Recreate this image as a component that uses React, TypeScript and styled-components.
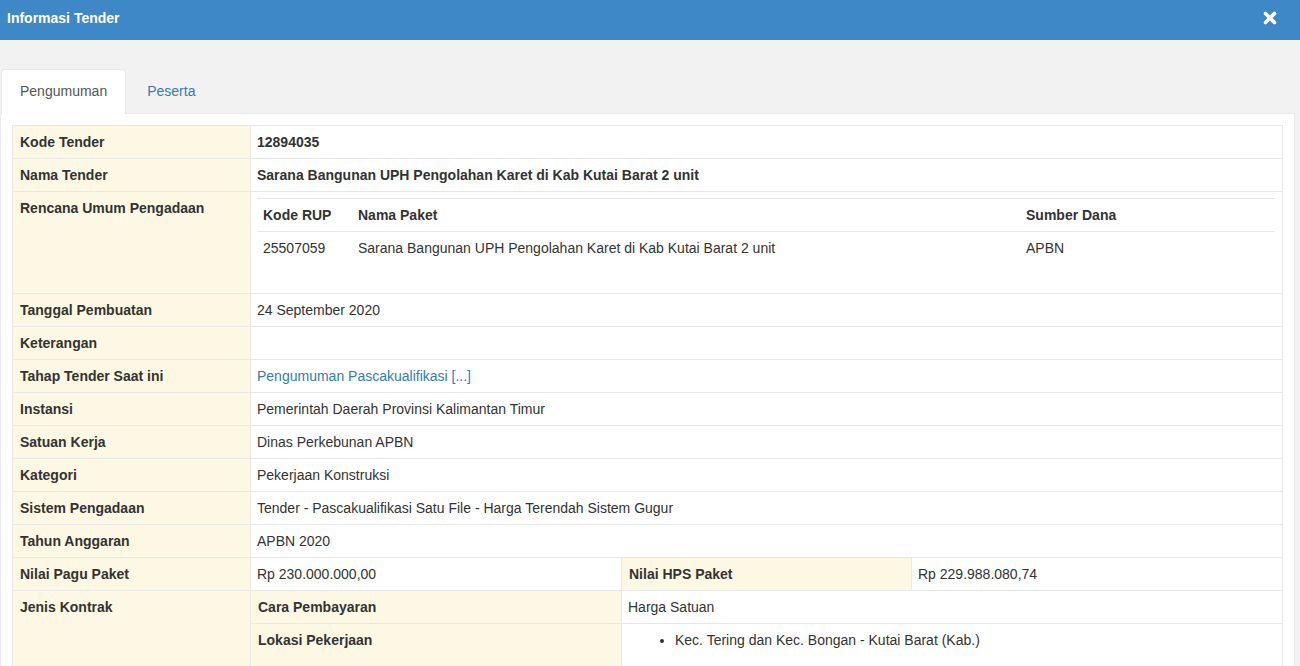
import React from 'react';
import styled, { createGlobalStyle } from 'styled-components';

const GlobalStyle = createGlobalStyle`
  html, body {
    margin: 0;
    padding: 0;
    background: #f2f2f2;
    font-family: "Liberation Sans", Arial, Helvetica, sans-serif;
    font-size: 14px;
    line-height: 20px;
    color: #333;
  }
  * { box-sizing: border-box; }
`;

const Page = styled.div`
  width: 1300px;
  height: 666px;
  overflow: hidden;
  background: #f2f2f2;
`;

const Header = styled.div`
  height: 40px;
  background: #3f88c8;
  display: flex;
  align-items: center;
  justify-content: space-between;
  padding: 0 23px 4px 7px;
`;

const HeaderTitle = styled.h4`
  margin: 0;
  color: #fff;
  font-size: 14px;
  font-weight: bold;
`;

const CloseButton = styled.button`
  border: 0;
  background: transparent;
  padding: 0;
  width: 14px;
  height: 14px;
  display: flex;
  cursor: pointer;
`;

const Body = styled.div`
  padding: 29px 5px 0 0;
`;

const TabList = styled.ul`
  list-style: none;
  margin: 0;
  padding: 0 0 0 1px;
  display: flex;
  height: 44px;
`;

const Tab = styled.li<{ $active?: boolean }>`
  height: 45px;
  padding: 0 18px 2px 18px;
  margin-right: 2px;
  display: flex;
  align-items: center;
  border: 1px solid ${p => (p.$active ? '#e6e6e6' : 'transparent')};
  border-bottom: none;
  border-radius: 4px 4px 0 0;
  background: ${p => (p.$active ? '#fff' : 'transparent')};
  color: ${p => (p.$active ? '#555' : '#337ab7')};
  position: relative;
  z-index: 1;
`;

const Panel = styled.div`
  background: #fff;
  border: 1px solid #ebebeb;
  border-bottom: none;
  padding: 11px 11px 20px 11px;
  height: 560px;
`;

const InfoTable = styled.table`
  width: 100%;
  border-collapse: collapse;
  table-layout: fixed;
  border: 1px solid #e3e3e3;
`;

const Label = styled.th`
  background: #fcf8e3;
  text-align: left;
  vertical-align: top;
  font-weight: bold;
  padding: 6px 7px 6px 7px;
  height: 33px;
  border: 1px solid #e8e8e8;
`;

const Value = styled.td<{ $bold?: boolean }>`
  text-align: left;
  vertical-align: top;
  padding: 6px 7px 6px 6px;
  height: 33px;
  border: 1px solid #e8e8e8;
  font-weight: ${p => (p.$bold ? 'bold' : 'normal')};
`;

const Link = styled.a`
  color: #337ab7;
  text-decoration: none;
`;

const SubTable = styled.table`
  width: 100%;
  border-collapse: collapse;
  table-layout: fixed;
  margin: 0 0 22px 0;
`;

const SubHead = styled.th`
  text-align: left;
  font-weight: bold;
  padding: 6px 6px;
  height: 33px;
  border-top: 1px solid #e8e8e8;
  border-bottom: 1px solid #e8e8e8;
`;

const SubCell = styled.td`
  text-align: left;
  padding: 6px 6px;
  height: 33px;
`;

const LocationList = styled.ul`
  margin: 0 0 10px 0;
  padding-left: 47px;
`;

const rows: { label: string; value: React.ReactNode }[] = [
  { label: 'Tanggal Pembuatan', value: '24 September 2020' },
  { label: 'Keterangan', value: '' },
  { label: 'Tahap Tender Saat ini', value: <Link href="#">Pengumuman Pascakualifikasi [...]</Link> },
  { label: 'Instansi', value: 'Pemerintah Daerah Provinsi Kalimantan Timur' },
  { label: 'Satuan Kerja', value: 'Dinas Perkebunan APBN' },
  { label: 'Kategori', value: 'Pekerjaan Konstruksi' },
  { label: 'Sistem Pengadaan', value: 'Tender - Pascakualifikasi Satu File - Harga Terendah Sistem Gugur' },
  { label: 'Tahun Anggaran', value: 'APBN 2020' },
];

const App: React.FC = () => {
  return (
    <Page>
      <GlobalStyle />
      <Header>
        <HeaderTitle>Informasi Tender</HeaderTitle>
        <CloseButton aria-label="close">
          <svg width="14" height="14" viewBox="0 0 14 14">
            <path d="M2.5 2.5 L11.5 11.5 M11.5 2.5 L2.5 11.5" stroke="#fff" strokeWidth="3.6" strokeLinecap="round" />
          </svg>
        </CloseButton>
      </Header>
      <Body>
        <TabList>
          <Tab $active>Pengumuman</Tab>
          <Tab>Peserta</Tab>
        </TabList>
        <Panel>
          <InfoTable>
            <colgroup>
              <col style={{ width: 238 }} />
              <col style={{ width: 371 }} />
              <col style={{ width: 290 }} />
              <col />
            </colgroup>
            <tbody>
              <tr>
                <Label>Kode Tender</Label>
                <Value $bold colSpan={3}>12894035</Value>
              </tr>
              <tr>
                <Label>Nama Tender</Label>
                <Value $bold colSpan={3}>Sarana Bangunan UPH Pengolahan Karet di Kab Kutai Barat 2 unit</Value>
              </tr>
              <tr>
                <Label>Rencana Umum Pengadaan</Label>
                <Value colSpan={3}>
                  <SubTable>
                    <colgroup>
                      <col style={{ width: 95 }} />
                      <col style={{ width: 668 }} />
                      <col />
                    </colgroup>
                    <thead>
                      <tr>
                        <SubHead>Kode RUP</SubHead>
                        <SubHead>Nama Paket</SubHead>
                        <SubHead>Sumber Dana</SubHead>
                      </tr>
                    </thead>
                    <tbody>
                      <tr>
                        <SubCell>25507059</SubCell>
                        <SubCell>Sarana Bangunan UPH Pengolahan Karet di Kab Kutai Barat 2 unit</SubCell>
                        <SubCell>APBN</SubCell>
                      </tr>
                    </tbody>
                  </SubTable>
                </Value>
              </tr>
              {rows.map(r => (
                <tr key={r.label}>
                  <Label>{r.label}</Label>
                  <Value colSpan={3}>{r.value}</Value>
                </tr>
              ))}
              <tr>
                <Label>Nilai Pagu Paket</Label>
                <Value>Rp 230.000.000,00</Value>
                <Label>Nilai HPS Paket</Label>
                <Value>Rp 229.988.080,74</Value>
              </tr>
              <tr>
                <Label rowSpan={2}>Jenis Kontrak</Label>
                <Label>Cara Pembayaran</Label>
                <Value colSpan={2}>Harga Satuan</Value>
              </tr>
              <tr>
                <Label>Lokasi Pekerjaan</Label>
                <Value colSpan={2}>
                  <LocationList>
                    <li>Kec. Tering dan Kec. Bongan - Kutai Barat (Kab.)</li>
                  </LocationList>
                </Value>
              </tr>
            </tbody>
          </InfoTable>
        </Panel>
      </Body>
    </Page>
  );
};

export default App;
